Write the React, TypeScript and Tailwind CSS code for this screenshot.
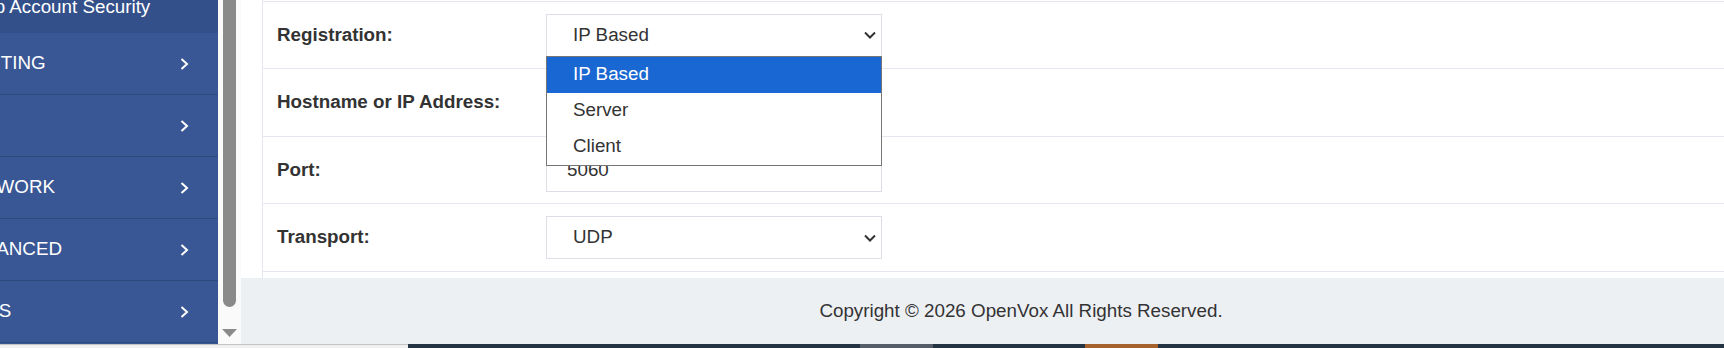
import React from 'react'

const menu = ['ROUTING', 'SMS', 'NETWORK', 'ADVANCED', 'LOGS']

function Caret() {
  return (
    <svg width="12" height="8" viewBox="0 0 12 8" className="shrink-0">
      <path d="M1 1.5 L6 6.5 L11 1.5" fill="none" stroke="#333" strokeWidth="2" />
    </svg>
  )
}

function MenuArrow() {
  return (
    <svg width="9" height="12" viewBox="0 0 9 12" className="shrink-0">
      <path d="M1.5 1 L7 6 L1.5 11" fill="none" stroke="#fff" strokeWidth="2" />
    </svg>
  )
}

function Sidebar() {
  return (
    <div className="w-[218px] h-full overflow-hidden bg-[#3a5795] text-white flex flex-col">
      <div className="h-[33px] overflow-hidden bg-[#33508a] whitespace-nowrap">
        <div className="-mt-[4px] -ml-[22px] leading-[21px]">Sip Account Security</div>
      </div>
      {menu.map((item) => (
        <div
          key={item}
          className="h-[62px] shrink-0 flex items-center justify-between pr-[29px] border-b border-[#2e4a7e] whitespace-nowrap"
        >
          <span className="-ml-[41px]">{item}</span>
          <MenuArrow />
        </div>
      ))}
    </div>
  )
}

function Scrollbar() {
  return (
    <div className="w-[23px] h-full bg-[#fafafa] flex flex-col items-center">
      <div className="w-[13px] h-[307px] bg-[#8a8a8a] rounded-b-full" />
      <svg width="15" height="8" viewBox="0 0 15 8" className="mt-[22px]">
        <polygon points="0,0 15,0 7.5,8" fill="#8a8a8a" />
      </svg>
    </div>
  )
}

function Field({ label, h, children }: { label: string; h: string; children: React.ReactNode }) {
  return (
    <div className={`${h} flex items-center border-b border-[#e4e7ed]`}>
      <div className="w-[283px] pl-[14px] font-bold">{label}</div>
      {children}
    </div>
  )
}

function SelectBox({ value }: { value: string }) {
  return (
    <div className="w-[336px] h-[43px] border border-[#dcdfe6] bg-white flex items-center justify-between pl-[26px] pr-[5px]">
      <span>{value}</span>
      <Caret />
    </div>
  )
}

function InputBox({ value }: { value?: string }) {
  return (
    <div className="w-[336px] h-[43px] border border-[#dcdfe6] bg-white flex items-center pl-[20px]">
      {value}
    </div>
  )
}

export default function App() {
  return (
    <div className="w-[1724px] h-[348px] overflow-hidden flex flex-col bg-white font-['Liberation_Sans',Arial,sans-serif] text-[18.8px] text-[#333]">
      <div className="flex h-[344px]">
        <Sidebar />
        <Scrollbar />
        <div className="flex-1 flex flex-col">
          <div className="h-[278px] pl-[21px] bg-white">
            <div className="h-full border-l border-[#e4e7ed] pt-px">
              <div className="border-t border-[#e4e7ed]">
                <Field label="Registration:" h="h-[67px]">
                  <div className="relative z-10">
                    <SelectBox value="IP Based" />
                    <div className="absolute left-0 top-[42px] w-[336px] border border-[#767676] bg-white">
                      <div className="h-[36px] flex items-center pl-[26px] bg-[#1967d2] text-white">IP Based</div>
                      <div className="h-[36px] flex items-center pl-[26px]">Server</div>
                      <div className="h-[36px] flex items-center pl-[26px]">Client</div>
                    </div>
                  </div>
                </Field>
                <Field label="Hostname or IP Address:" h="h-[68px]">
                  <InputBox />
                </Field>
                <Field label="Port:" h="h-[67px]">
                  <InputBox value="5060" />
                </Field>
                <Field label="Transport:" h="h-[68px]">
                  <SelectBox value="UDP" />
                </Field>
              </div>
            </div>
          </div>
          <footer className="flex-1 bg-[#edf0f3] flex items-center justify-center pl-[77px]">
            Copyright © 2026 OpenVox All Rights Reserved.
          </footer>
        </div>
      </div>
      <div className="h-[4px] flex">
        <div className="w-[408px] bg-[#f0f0f0] border-t border-[#c4c4c4]" />
        <div className="w-[452px] bg-[#253443]" />
        <div className="w-[73px] bg-[#545d68]" />
        <div className="w-[152px] bg-[#253443]" />
        <div className="w-[73px] bg-[#a5622d]" />
        <div className="flex-1 bg-[#253443]" />
      </div>
    </div>
  )
}
